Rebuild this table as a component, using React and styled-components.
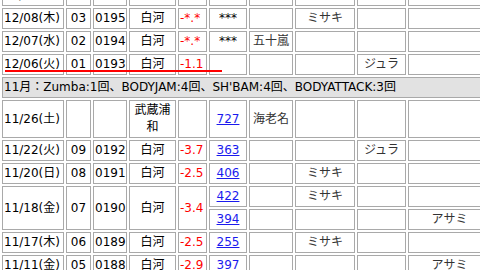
import React from 'react';
import styled, { createGlobalStyle } from 'styled-components';

const GlobalStyle = createGlobalStyle`
  html, body {
    margin: 0;
    padding: 0;
    background: #fff;
    overflow: hidden;
  }
  body {
    font-family: "DejaVu Sans", "Noto Sans CJK JP", sans-serif;
    font-size: 12px;
    color: #000;
  }
`;

const colWidths = [62, 25, 34, 47, 29, 38, 44, 60, 49, 83];

const rows = [
  { date: '12/10(土)', no: '', code: '', place: '', diff: '', sub: [['', '', '', '', 'アサミ']] },
  { date: '12/08(木)', no: '03', code: '0195', place: '白河', diff: '-*.*', sub: [['***', '', 'ミサキ', '', '']] },
  { date: '12/07(水)', no: '02', code: '0194', place: '白河', diff: '-*.*', sub: [['***', '五十嵐', '', '', '']] },
  { date: '12/06(火)', no: '01', code: '0193', place: '白河', diff: '-1.1', sub: [['', '', '', 'ジュラ', '']] },
  { month: "11月：Zumba:1回、BODYJAM:4回、SH'BAM:4回、BODYATTACK:3回" },
  { date: '11/26(土)', no: '', code: '', place: '武蔵浦和', diff: '', sub: [[{ link: '727' }, '海老名', '', '', '']] },
  { date: '11/22(火)', no: '09', code: '0192', place: '白河', diff: '-3.7', sub: [[{ link: '363' }, '', '', 'ジュラ', '']] },
  { date: '11/20(日)', no: '08', code: '0191', place: '白河', diff: '-2.5', sub: [[{ link: '406' }, '', 'ミサキ', '', '']] },
  {
    date: '11/18(金)', no: '07', code: '0190', place: '白河', diff: '-3.4',
    sub: [
      [{ link: '422' }, '', 'ミサキ', '', ''],
      [{ link: '394' }, '', '', '', 'アサミ'],
    ],
  },
  { date: '11/17(木)', no: '06', code: '0189', place: '白河', diff: '-2.5', sub: [[{ link: '255' }, '', 'ミサキ', '', '']] },
  { date: '11/11(金)', no: '05', code: '0188', place: '白河', diff: '-2.9', sub: [[{ link: '397' }, '', '', '', 'アサミ']] },
];

const App = () => {
  return (
    <>
      <GlobalStyle />
      <Page>
        <Table>
          <colgroup>
            {colWidths.map((w, i) => (
              <Col key={i} $w={w} />
            ))}
          </colgroup>
          <tbody>
            {rows.map((row, i) => {
              if (row.month) {
                return (
                  <tr key={i}>
                    <MonthCell colSpan={10}>{row.month}</MonthCell>
                  </tr>
                );
              }
              const span = row.sub.length;
              return row.sub.map((s, j) => (
                <tr key={`${i}-${j}`}>
                  {j === 0 && (
                    <>
                      <Cell rowSpan={span}>{row.date}</Cell>
                      <Cell rowSpan={span} $align="center">{row.no}</Cell>
                      <Cell rowSpan={span}>{row.code}</Cell>
                      <Cell rowSpan={span} $align="center">{row.place}</Cell>
                      <Cell rowSpan={span} $red>{row.diff}</Cell>
                    </>
                  )}
                  {s.map((v, k) => (
                    <Cell key={k} $align="center" $soft={k > 0}>
                      {typeof v === 'object' ? <Link href="#">{v.link}</Link> : v}
                    </Cell>
                  ))}
                </tr>
              ));
            })}
          </tbody>
        </Table>
        <Underline />
      </Page>
    </>
  );
};

export default App;

const Page = styled.div`
  position: relative;
  margin-top: -17px;
`;

const Table = styled.table`
  table-layout: fixed;
  width: 493px;
  border-collapse: separate;
  border-spacing: 2px;
`;

const Col = styled.col`
  width: ${p => p.$w}px;
`;

const Cell = styled.td`
  border: 1px solid #a9a9a9;
  padding: 1px;
  line-height: 17px;
  text-align: ${p => p.$align || 'left'};
  color: ${p => (p.$red ? '#ff0000' : p.$soft ? '#333' : '#000')};
  vertical-align: middle;
  overflow: hidden;
`;

const MonthCell = styled.td`
  border: 1px solid #a9a9a9;
  padding: 1px;
  line-height: 17px;
  background: #e2e2e2;
  white-space: nowrap;
`;

const Link = styled.a`
  color: #1a1aee;
  text-decoration: underline;
`;

const Underline = styled.div`
  position: absolute;
  left: 5px;
  top: 87px;
  width: 217px;
  height: 2px;
  background: #ff0000;
`;
